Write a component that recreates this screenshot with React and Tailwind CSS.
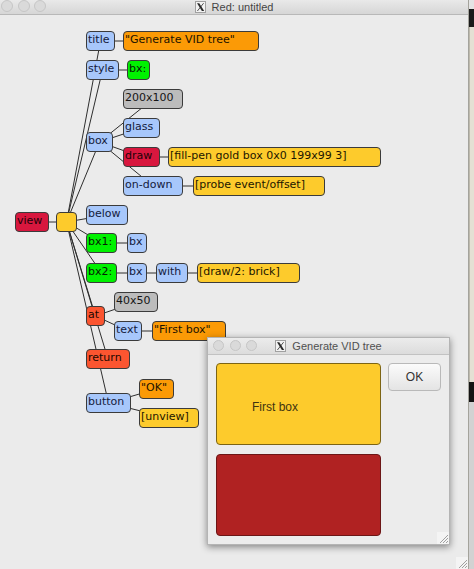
import React from "react";

// title bar height of the main window; node coords below are page coords
const TOP = 15;
const H = 20;

const COLORS = {
  blue: "bg-[#a7c7fb] text-[#14203c]",
  orange: "bg-[#fb9a06] text-[#1a1200]",
  green: "bg-[#00f200] text-[#062006]",
  gray: "bg-[#bcbcbc] text-[#161616]",
  crimson: "bg-[#d8173e] text-[#1c0208]",
  gold: "bg-[#fdcb2c] text-[#1c1600]",
  tomato: "bg-[#fb5530] text-[#200800]",
};

const nodes = [
  { id: "title", label: "title", x: 86, y: 31, w: 29, c: "blue" },
  { id: "titleV", label: '"Generate VID tree"', x: 123, y: 31, w: 136, c: "orange" },
  { id: "style", label: "style", x: 86, y: 60, w: 33, c: "blue" },
  { id: "styleV", label: "bx:", x: 127, y: 60, w: 23, c: "green" },
  { id: "size", label: "200x100", x: 123, y: 89, w: 60, c: "gray" },
  { id: "glass", label: "glass", x: 123, y: 118, w: 37, c: "blue" },
  { id: "box", label: "box", x: 86, y: 132, w: 27, c: "blue" },
  { id: "draw", label: "draw", x: 123, y: 147, w: 37, c: "crimson" },
  { id: "drawV", label: "[fill-pen gold box 0x0 199x99 3]", x: 168, y: 147, w: 213, c: "gold" },
  { id: "ondown", label: "on-down", x: 123, y: 176, w: 60, c: "blue" },
  { id: "ondownV", label: "[probe event/offset]", x: 193, y: 176, w: 132, c: "gold" },
  { id: "view", label: "view", x: 15, y: 212, w: 34, c: "crimson" },
  { id: "root", label: "", x: 56, y: 212, w: 21, c: "gold" },
  { id: "below", label: "below", x: 86, y: 205, w: 42, c: "blue" },
  { id: "bx1", label: "bx1:", x: 86, y: 233, w: 31, c: "green" },
  { id: "bx1b", label: "bx", x: 127, y: 233, w: 20, c: "blue" },
  { id: "bx2", label: "bx2:", x: 86, y: 263, w: 31, c: "green" },
  { id: "bx2b", label: "bx", x: 127, y: 263, w: 20, c: "blue" },
  { id: "with", label: "with", x: 156, y: 263, w: 32, c: "blue" },
  { id: "withV", label: "[draw/2: brick]", x: 197, y: 263, w: 103, c: "gold" },
  { id: "atSize", label: "40x50", x: 114, y: 292, w: 44, c: "gray" },
  { id: "at", label: "at", x: 86, y: 306, w: 19, c: "tomato" },
  { id: "text", label: "text", x: 114, y: 321, w: 28, c: "blue" },
  { id: "textV", label: '"First box"', x: 152, y: 321, w: 74, c: "orange" },
  { id: "return", label: "return", x: 86, y: 349, w: 44, c: "tomato" },
  { id: "okV", label: '"OK"', x: 139, y: 379, w: 35, c: "orange" },
  { id: "button", label: "button", x: 86, y: 393, w: 45, c: "blue" },
  { id: "unview", label: "[unview]", x: 139, y: 408, w: 60, c: "gold" },
];

const edges = [
  ["view", "root"],
  ["root", "title"],
  ["root", "style"],
  ["root", "box"],
  ["root", "below"],
  ["root", "bx1"],
  ["root", "bx2"],
  ["root", "at"],
  ["root", "return"],
  ["root", "button"],
  ["title", "titleV"],
  ["style", "styleV"],
  ["box", "size"],
  ["box", "glass"],
  ["box", "draw"],
  ["box", "ondown"],
  ["draw", "drawV"],
  ["ondown", "ondownV"],
  ["bx1", "bx1b"],
  ["bx2", "bx2b"],
  ["bx2b", "with"],
  ["with", "withV"],
  ["at", "atSize"],
  ["at", "text"],
  ["text", "textV"],
  ["button", "okV"],
  ["button", "unview"],
];

const byId = Object.fromEntries(nodes.map((n) => [n.id, n]));
const center = (n) => [n.x + n.w / 2, n.y - TOP + H / 2];

function XIcon() {
  return (
    <svg width="11" height="12" viewBox="0 0 11 12">
      <rect x="0.5" y="0.5" width="10" height="11" fill="#f2f2f2" stroke="#a0a0a0" />
      <path d="M2 2.2 L4.3 2.2 L9.2 10 L6.9 10 Z" fill="#2a2a2a" />
      <path d="M8.6 2.2 L2.4 10" stroke="#2a2a2a" strokeWidth="0.8" />
    </svg>
  );
}

function Grip() {
  return (
    <svg width="12" height="12" viewBox="0 0 12 12">
      <rect width="12" height="12" fill="#f4f4f4" />
      <path d="M11 3 L3 11 M11 6 L6 11 M11 9 L9 11" stroke="#8a8a8a" strokeWidth="0.8" />
    </svg>
  );
}

function Lights({ size }) {
  return (
    <div className={`flex ${size === "sm" ? "gap-[5.5px]" : "gap-[4.5px]"}`}>
      {[0, 1, 2].map((i) => (
        <span
          key={i}
          className={`rounded-full bg-[#dadada] border border-[#c6c6c6] ${
            size === "sm" ? "w-[11px] h-[11px]" : "w-[12px] h-[12px]"
          }`}
        />
      ))}
    </div>
  );
}

function Node({ n }) {
  return (
    <div
      className={`absolute rounded-[4px] border border-[#3b3b3b] pl-[1px] pt-[1px] text-[11px] leading-[13px] whitespace-nowrap overflow-hidden ${COLORS[n.c]}`}
      style={{ left: n.x, top: n.y - TOP, width: n.w, height: H }}
    >
      {n.label}
    </div>
  );
}

function GenWindow() {
  return (
    <div className="absolute left-[207px] top-[337px] w-[243px] h-[208px] flex flex-col bg-[#ececec] border border-[#b4b4b4] shadow-[0_2px_7px_rgba(0,0,0,0.45)]">
      <div className="relative h-[17px] flex items-center justify-center bg-gradient-to-b from-[#ececec] to-[#dcdcdc] border-b border-[#c2c2c2]">
        <div className="absolute left-[5px] top-[2px]">
          <Lights size="sm" />
        </div>
        <div className="flex items-center gap-[6px] text-[11px] text-[#505050]">
          <XIcon />
          <span>Generate VID tree</span>
        </div>
      </div>
      <div className="relative flex-1 flex gap-[7px] pl-[8px] pt-[8px]">
        <div className="flex flex-col gap-[9px]">
          <div className="w-[165px] h-[82px] flex items-center pl-[35px] pt-[6px] rounded-[4px] bg-[#fdcb2c] border border-[#7c6414] text-[12px] text-[#3f3410]">
            First box
          </div>
          <div className="w-[165px] h-[82px] rounded-[4px] bg-[#b02222] border border-[#6c1616]" />
        </div>
        <div className="w-[53px] h-[28px] flex items-center justify-center rounded-[4px] bg-gradient-to-b from-[#fbfbfb] to-[#e4e4e4] border border-[#b9b9b9] text-[12px] text-[#333]">
          OK
        </div>
        <div className="absolute right-0 bottom-0">
          <Grip />
        </div>
      </div>
    </div>
  );
}

export default function App() {
  return (
    <div className="relative flex w-[474px] h-[569px] overflow-hidden bg-[#e0dccf] font-['Liberation_Sans',Arial,sans-serif]">
      <div className="relative flex flex-col w-[469px] h-full bg-[#ebebeb] border-r border-[#a4a39c]">
        <div className="relative h-[15px] flex items-center justify-center bg-gradient-to-b from-[#e9e9e9] to-[#d6d6d6] border-b border-[#b8b8b8]">
          <div className="absolute left-[1px] top-[0px]">
            <Lights />
          </div>
          <div className="flex items-center gap-[6px] text-[11px] text-[#454545]">
            <XIcon />
            <span>Red: untitled</span>
          </div>
        </div>

        <div className="relative flex-1 font-['DejaVu_Sans',sans-serif]">
          <svg className="absolute inset-0" width="469" height="554">
            {edges.map(([a, b]) => {
              const [x1, y1] = center(byId[a]);
              const [x2, y2] = center(byId[b]);
              return (
                <line
                  key={a + b}
                  x1={x1}
                  y1={y1}
                  x2={x2}
                  y2={y2}
                  stroke="#2e2e2e"
                  strokeWidth="1"
                />
              );
            })}
          </svg>
          {nodes.map((n) => (
            <Node key={n.id} n={n} />
          ))}
          <div className="absolute right-0 bottom-0">
            <Grip />
          </div>
        </div>
      </div>

      <div className="flex flex-col flex-1">
        <div className="h-[9px] bg-[#e4e4e4]" />
        <div className="h-[18px] bg-[#1b1b1b]" />
        <div className="h-[355px] bg-[#e4e0d4] border-l border-[#bdb9ac]" />
        <div className="h-[20px] bg-[#141414]" />
        <div className="flex-1 bg-[#d2d2d2]" />
      </div>

      <GenWindow />
    </div>
  );
}
